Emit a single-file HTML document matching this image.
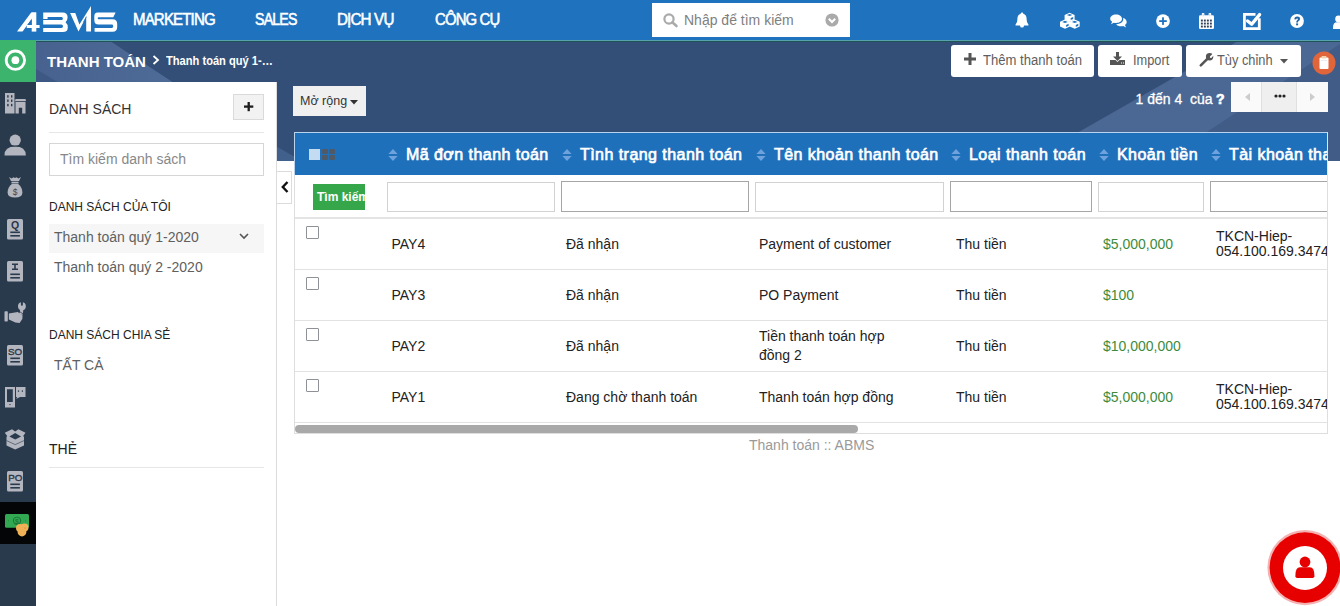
<!DOCTYPE html>
<html><head><meta charset="utf-8">
<style>
*{margin:0;padding:0;box-sizing:border-box}
html,body{width:1340px;height:606px;overflow:hidden;background:#fff;font-family:"Liberation Sans",sans-serif;color:#333}
.a{position:absolute}
.t{position:absolute;white-space:nowrap}
svg{position:absolute;overflow:visible}
#top{left:0;top:0;width:1340px;height:40px;background:#1f72bd}
#tline{left:0;top:40px;width:1340px;height:1px;background:#56a3ab}
.nav{color:#fff;font-weight:normal;-webkit-text-stroke:0.55px #fff;font-size:16px;line-height:16px;top:12px;transform-origin:0 0;letter-spacing:-0.9px}
#hdr{left:36px;top:41px;width:1304px;height:120px;background:#344f77;overflow:hidden}
#side{left:0;top:41px;width:36px;height:565px;background:#2a3a4d}
#green{left:0;top:40px;width:36px;height:42px;background:#3cb46e}
#panel{left:36px;top:82px;width:241px;height:524px;background:#fff;border-right:1px solid #dcdcdc}
.btn{position:absolute;background:#fff;border-radius:3px;top:45px;height:32px}
.btxt{font-size:14px;line-height:14px;color:#5e5e5e;top:53px;transform:scaleX(0.915);transform-origin:0 0}
.ptitle{font-size:14px;line-height:14px;color:#333}
.psub{font-size:12px;line-height:12px;color:#222}
.pitem{font-size:14px;line-height:14px;color:#606060}
.hsep{position:absolute;left:49px;width:215px;height:1px;background:#e6e6e6}
#tbl{left:294px;top:132px;width:1034px;height:302px;border:1px solid #dedede;border-top:none;background:#fff;overflow:hidden}
#thead{left:294px;top:132px;width:1034px;height:43px;background:#1f70bb;border-top:1px solid #b9d3ec;border-left:1px solid #b9d3ec;border-right:1px solid #dfe8f2}
.th{font-size:16px;line-height:16px;font-weight:normal;-webkit-text-stroke:0.65px #fff;letter-spacing:0.45px;color:#fff;top:147px}
.inp{position:absolute;top:182px;height:30px;background:#fff;border:1px solid #d2d2d2}
.inp.d{border-color:#a6a6a6;top:181px;height:31px}
.rowsep{position:absolute;left:295px;width:1033px;height:1px;background:#e2e2e2}
.cb{position:absolute;left:306px;width:13px;height:13px;border:1px solid #8e9196;border-radius:1px;background:#fff}
.td{font-size:14px;line-height:14px;color:#222}
.amt{color:#3d8b40}
</style></head><body>
<div id="top" class="a"></div>
<div id="tline" class="a"></div>
<div id="hdr" class="a">
  <div class="a" style="left:0;top:0;width:1304px;height:1px;background:#20525a;z-index:2"></div>
  <svg width="1304" height="120" style="left:0;top:0">
    <defs><linearGradient id="gl" x1="0" y1="0" x2="1" y2="0"><stop offset="0" stop-color="#47628f"/><stop offset="1" stop-color="#4e6a96"/></linearGradient></defs>
    <polygon points="0,0 74,0 136.5,41 0,41" fill="url(#gl)"/>
    <polygon points="0,28 21.5,41 0,41" fill="#3d5883"/>
    <polygon points="241,105.8 258,115.4 258,120 241,120" fill="#42608c"/>
    <polygon points="992,120 1202,0 1304,0 1304,120" fill="#4b6793"/>
    <polygon points="1127,120 1304,3 1304,120" fill="#425c88"/>
  </svg>
</div>
<div id="side" class="a"></div>
<div id="green" class="a"></div>
<div id="panel" class="a"></div>

<!-- top bar logo -->
<svg width="130" height="40" style="left:0;top:0" viewBox="0 0 130 40">
  <g fill="#fff">
    <polygon points="17,31.6 22.6,31.6 36.3,12.5 31.2,12.5"/>
    <rect x="31.7" y="12.5" width="4.6" height="19.1"/>
    <rect x="26.8" y="25" width="12.8" height="3"/>
    <path d="M43.2,12.4 H62.5 Q67.6,12.4 67.6,17.2 Q67.6,20.4 65.6,22.2 Q67.8,24 67.8,27.6 Q67.8,32.1 62.8,32.1 H43.2 V27.9 H61.4 Q63,27.9 63,26.15 Q63,24.4 61.4,24.4 H43.2 V20 H61.6 Q62.9,20 62.9,18.5 Q62.9,17 61.6,17 H47.6 V19.1 H43.2 Z"/>
    <polygon points="70.1,13 75.3,13 79.4,24.5 91,6 91,31.6 86.2,31.6 86.2,17 78.5,31.6"/>
    <path d="M97.5,12.4 H115.6 L113.3,17.2 H98.6 Q97.7,17.2 97.7,18.2 Q97.7,19.3 98.6,19.3 H112.6 Q117.2,19.3 117.2,24 V27 Q117.2,31.7 112.6,31.7 H94.6 V28 H111.8 Q113.2,28 113.2,26.6 V25.9 Q113.2,24.5 111.8,24.5 H98.4 Q94.3,24.5 94.3,20.3 V16.6 Q94.3,12.4 97.5,12.4 Z"/>
  </g>
  <polygon points="27.3,25 31.6,19.2 31.6,25" fill="#1f72bd"/>
  <line x1="86.4" y1="16.6" x2="83.4" y2="22.4" stroke="#1f72bd" stroke-width="0.9"/>
</svg>
<!-- nav texts -->
<div class="t nav" style="left:133px;transform:scaleX(0.94)">MARKETING</div>
<div class="t nav" style="left:255px;transform:scaleX(0.885)">SALES</div>
<div class="t nav" style="left:337px;transform:scaleX(0.95)">DỊCH VỤ</div>
<div class="t nav" style="left:435px;transform:scaleX(0.93)">CÔNG CỤ</div>

<!-- search box -->
<div class="a" style="left:652px;top:3px;width:198px;height:34px;background:#fff"></div>
<svg width="16" height="14" style="left:663px;top:13px" viewBox="0 0 16 14">
  <circle cx="6" cy="6" r="4.6" fill="none" stroke="#aaa" stroke-width="2.2"/>
  <line x1="9.3" y1="9.3" x2="13.5" y2="13" stroke="#aaa" stroke-width="2.6" stroke-linecap="round"/>
</svg>
<div class="t" style="left:684px;top:13px;font-size:14px;line-height:14px;color:#808080">Nhập để tìm kiếm</div>
<svg width="14" height="14" style="left:825px;top:13px" viewBox="0 0 14 14">
  <circle cx="7" cy="7" r="6.6" fill="#aaa"/>
  <polyline points="3.8,5.8 7,9 10.2,5.8" fill="none" stroke="#fff" stroke-width="2"/>
</svg>

<!-- top right icons -->
<svg width="16" height="16" style="left:1014px;top:12px" viewBox="0 0 16 16">
  <path d="M8,0.5 Q9.3,0.5 9.3,1.8 Q12.6,2.8 12.6,7 Q12.6,11 14.5,12.7 V13.5 H1.5 V12.7 Q3.4,11 3.4,7 Q3.4,2.8 6.7,1.8 Q6.7,0.5 8,0.5 Z M6,13.4 H10 Q10,15.6 8,15.6 Q6,15.6 6,13.4 Z" fill="#fff"/>
</svg>
<svg width="20" height="17" style="left:1060px;top:12px" viewBox="0 0 20 17"><polygon points="4.6,3.0 9.6,0.8 14.6,3.0 14.6,7.8 9.6,10.0 4.6,7.8" fill="#fff"/><polygon points="6.8,3.0999999999999996 9.6,2.0 12.399999999999999,3.0999999999999996 9.6,4.1" fill="#1f72bd"/><polygon points="10.7,6.1 13.2,5.0 13.2,7.0 10.7,8.1" fill="#1f72bd"/><polygon points="0,9.8 5,7.6 10,9.8 10,14.6 5,16.799999999999997 0,14.6" fill="#fff"/><polygon points="2.2,9.899999999999999 5,8.799999999999999 7.8,9.899999999999999 5,10.899999999999999" fill="#1f72bd"/><polygon points="6.1,12.899999999999999 8.6,11.8 8.6,13.8 6.1,14.899999999999999" fill="#1f72bd"/><polygon points="9.7,9.8 14.7,7.6 19.7,9.8 19.7,14.6 14.7,16.799999999999997 9.7,14.6" fill="#fff"/><polygon points="11.899999999999999,9.899999999999999 14.7,8.799999999999999 17.5,9.899999999999999 14.7,10.899999999999999" fill="#1f72bd"/><polygon points="15.799999999999999,12.899999999999999 18.299999999999997,11.8 18.299999999999997,13.8 15.799999999999999,14.899999999999999" fill="#1f72bd"/></svg>
<svg width="17" height="14" style="left:1110px;top:13.8px" viewBox="0 0 17 14">
  <path d="M6,0.5 C9.6,0.5 12,2.4 12,4.8 C12,7.2 9.6,9 6,9 C5.2,9 4.5,8.9 3.8,8.7 L1,10.2 L2.1,7.8 C0.9,7 0.2,6 0.2,4.8 C0.2,2.4 2.6,0.5 6,0.5 Z" fill="#fff"/>
  <path d="M13,3.8 C15.3,4.6 16.7,6.2 16.7,8 C16.7,9.2 16.1,10.2 15,11 L16,13.5 L13.2,12 C12.6,12.2 12,12.3 11.3,12.3 C9,12.3 7.2,11.5 6.2,10.2 C10.3,10.2 13.3,8 13.3,5 C13.3,4.6 13.2,4.2 13,3.8 Z" fill="#fff"/>
</svg>
<svg width="15" height="15" style="left:1156px;top:13.5px" viewBox="0 0 15 15">
  <circle cx="7" cy="7.1" r="6.9" fill="#fff"/>
  <rect x="6.1" y="3.3" width="1.8" height="7.6" fill="#1f72bd"/>
  <rect x="3.2" y="6.2" width="7.6" height="1.8" fill="#1f72bd"/>
</svg>
<svg width="15" height="16" style="left:1199px;top:12.6px" viewBox="0 0 15 16">
  <rect x="0" y="2.2" width="15" height="13.8" rx="1.3" fill="#fff"/>
  <rect x="2.8" y="0" width="2.6" height="4" rx="0.8" fill="#fff"/>
  <rect x="9.6" y="0" width="2.6" height="4" rx="0.8" fill="#fff"/>
  <rect x="3.8" y="0.7" width="0.6" height="2.6" fill="#9fb4cc"/>
  <rect x="10.6" y="0.7" width="0.6" height="2.6" fill="#9fb4cc"/>
  <g fill="#2d3e56"><rect x="1.9" y="6.6" width="1.9" height="1.9"/><rect x="4.9" y="6.6" width="1.9" height="1.9"/><rect x="7.9" y="6.6" width="1.9" height="1.9"/><rect x="10.9" y="6.6" width="1.9" height="1.9"/><rect x="1.9" y="9.6" width="1.9" height="1.9"/><rect x="4.9" y="9.6" width="1.9" height="1.9"/><rect x="7.9" y="9.6" width="1.9" height="1.9"/><rect x="10.9" y="9.6" width="1.9" height="1.9"/><rect x="1.9" y="12.6" width="1.9" height="1.9"/><rect x="4.9" y="12.6" width="1.9" height="1.9"/><rect x="7.9" y="12.6" width="1.9" height="1.9"/><rect x="10.9" y="12.6" width="1.9" height="1.9"/></g>
</svg>
<svg width="19" height="19" style="left:1243px;top:12px" viewBox="0 0 19 19">
  <path d="M0,0.9 H12.5 V3.7 H2.8 V15.2 H14.9 V6.2 H17.7 V18 H0 Z" fill="#fff"/>
  <polyline points="4.6,8.9 8.7,12.3 16.6,2.6" fill="none" stroke="#fff" stroke-width="3.3" stroke-linecap="round" stroke-linejoin="round"/>
</svg>
<svg width="15" height="15" style="left:1290px;top:13.6px" viewBox="0 0 15 15">
  <circle cx="7" cy="7" r="6.9" fill="#fff"/>
  <path d="M4.3,5.2 Q4.5,2.6 7.2,2.6 Q10,2.6 10,5 Q10,6.3 8.6,7.1 Q8,7.5 8,8.5 H6.2 Q6.1,6.9 7.2,6.2 Q8,5.7 8,5.1 Q8,4.4 7.1,4.4 Q6.3,4.4 6.1,5.5 Z" fill="#1f64a6"/>
  <rect x="6.1" y="9.4" width="2" height="1.9" fill="#1f64a6"/>
</svg>
<svg width="10" height="14" style="left:1333px;top:15px" viewBox="0 0 10 14">
  <circle cx="5.6" cy="4" r="3.4" fill="#fff"/>
  <path d="M0,12.5 Q0,7.2 4,7.2 H9 Q12,7.2 12,12.5 V14 H0 Z" fill="#fff"/>
</svg>

<!-- green target icon -->
<svg width="22" height="22" style="left:4px;top:50px" viewBox="0 0 22 22">
  <circle cx="11.4" cy="10.2" r="9.2" fill="none" stroke="#fff" stroke-width="2.8"/>
  <circle cx="11.4" cy="10.2" r="3.9" fill="#fff"/>
</svg>

<!-- breadcrumb -->
<div class="t" style="left:47px;top:54px;font-size:15px;line-height:15px;font-weight:bold;color:#fff">THANH TOÁN</div>
<svg width="8" height="10" style="left:152px;top:55px" viewBox="0 0 8 10">
  <polyline points="1.5,1 6,5 1.5,9" fill="none" stroke="#fff" stroke-width="1.8"/>
</svg>
<div class="t" style="left:166px;top:54px;font-size:13px;line-height:13px;font-weight:bold;color:#fff;transform:scaleX(0.855);transform-origin:0 0">Thanh toán quý 1-…</div>

<!-- toolbar buttons -->
<div class="btn" style="left:951px;width:143px"></div>
<svg width="12" height="12" style="left:964px;top:53px" viewBox="0 0 12 12">
  <rect x="4.5" y="0" width="3" height="12" fill="#555"/><rect x="0" y="4.5" width="12" height="3" fill="#555"/>
</svg>
<div class="t btxt" style="left:983px;transform:scaleX(0.935)">Thêm thanh toán</div>
<div class="btn" style="left:1098px;width:84px"></div>
<svg width="15" height="13" style="left:1110px;top:52px" viewBox="0 0 15 13">
  <rect x="6" y="0" width="3" height="5" fill="#555"/>
  <polygon points="3,4.5 12,4.5 7.5,9" fill="#555"/>
  <path d="M0,8 H5.5 L7.5,10 L9.5,8 H15 V13 H0 Z" fill="#555"/>
  <rect x="11" y="10.5" width="1" height="1" fill="#fff"/><rect x="13" y="10.5" width="1" height="1" fill="#fff"/>
</svg>
<div class="t btxt" style="left:1133px">Import</div>
<div class="btn" style="left:1186px;width:115px"></div>
<svg width="15" height="14" style="left:1199px;top:53px" viewBox="0 0 15 14">
  <line x1="1.8" y1="12.4" x2="8.6" y2="5.6" stroke="#555" stroke-width="2.6" stroke-linecap="round"/>
  <circle cx="10.6" cy="3.8" r="3.7" fill="#555"/>
  <polygon points="11.2,3.2 14.6,-0.2 16,1.2 12.6,4.6" fill="#fff"/>
  <circle cx="11.9" cy="3.9" r="1" fill="#fff"/>
</svg>
<div class="t btxt" style="left:1217px">Tùy chỉnh</div>
<svg width="8" height="5" style="left:1280px;top:59px" viewBox="0 0 8 5"><polygon points="0,0 8,0 4,4.5" fill="#555"/></svg>
<svg width="24" height="24" style="left:1312px;top:51px" viewBox="0 0 24 24">
  <circle cx="12" cy="12" r="11.5" fill="#e0653b"/>
  <rect x="7.5" y="6.5" width="9" height="11.5" rx="1" fill="#fff"/>
  <rect x="9.5" y="5" width="5" height="2.5" rx="0.8" fill="#f2d1b0"/>
  <rect x="9" y="9" width="6" height="0.8" fill="#e8e8e8"/>
</svg>

<!-- Mở rộng -->
<div class="a" style="left:293px;top:86px;width:73px;height:30px;background:#f0f0f0"></div>
<div class="t" style="left:300px;top:95px;font-size:12.5px;line-height:12px;color:#333">Mở rộng</div>
<svg width="8" height="5" style="left:350px;top:100px" viewBox="0 0 8 5"><polygon points="0,0 8,0 4,4.5" fill="#333"/></svg>

<!-- pager -->
<div class="t" style="left:1135.5px;top:92px;font-size:14px;line-height:14px;color:#fff;-webkit-text-stroke:0.3px #fff">1 đến 4 &nbsp;của</div>
<div class="t" style="left:1216px;top:92px;font-size:14px;line-height:14px;color:#fff;font-weight:bold;-webkit-text-stroke:0.7px #fff">?</div>
<div class="a" style="left:1231px;top:82px;width:97px;height:30px;background:#fafafa"></div>
<div class="a" style="left:1261px;top:82px;width:36px;height:30px;background:#efefef;border-left:1px solid #e0e0e0;border-right:1px solid #e0e0e0"></div>
<svg width="5" height="8" style="left:1245px;top:93px" viewBox="0 0 5 8"><polygon points="5,0 5,8 0,4" fill="#ccc"/></svg>
<svg width="5" height="8" style="left:1310px;top:93px" viewBox="0 0 5 8"><polygon points="0,0 0,8 5,4" fill="#ccc"/></svg>
<svg width="12" height="4" style="left:1274px;top:94px" viewBox="0 0 12 4"><circle cx="2" cy="2" r="1.6" fill="#222"/><circle cx="6" cy="2" r="1.6" fill="#222"/><circle cx="10" cy="2" r="1.6" fill="#222"/></svg>

<!-- side icons -->
<div id="sideicons"><svg width="36" height="470" style="left:0;top:84px" viewBox="0 84 36 470">
 <g fill="#b3b6bf">
  <!-- building -->
  <path d="M5,93 H14.5 V113.5 H5 Z"/>
  <path d="M15.5,99 H25.5 L26,101 H25.5 V113.5 H22.2 V107.8 H18.8 V113.5 H15.5 V101 H15 Z"/>
  <!-- user -->
  <circle cx="15.2" cy="140.2" r="5.6"/>
  <path d="M4.5,155.4 Q4.5,146.5 15.2,146.5 Q25.8,146.5 25.8,155.4 Z"/>
  <!-- money bag -->
  <path d="M9,177 L11.5,178.5 L13.5,177.3 L15,178 L16.5,177.3 L18.5,178.5 L21,177 L19,181 H11 Z"/>
  <rect x="11.5" y="181.7" width="7" height="1.8"/>
  <path d="M11.8,184 H18.2 Q22.4,187.5 22.4,192.5 Q22.4,197.5 15,197.5 Q7.6,197.5 7.6,192.5 Q7.6,187.5 11.8,184 Z"/>
  <!-- docs -->
  <rect x="7" y="219" width="16" height="20.5" rx="1.5"/>
  <rect x="7" y="261" width="16" height="20.5" rx="1.5"/>
  <rect x="7" y="345" width="16" height="20.5" rx="1.5"/>
  <rect x="7" y="471" width="16" height="20.5" rx="1.5"/>
  <!-- hand + wrench -->
  <rect x="4.5" y="311.2" width="3.3" height="10.4" rx="0.8"/>
  <path d="M8.9,313.4 L17.7,312 L22.6,315.5 L22.3,319 L19.6,323.1 L15.4,322.6 L8.9,319.4 Z"/>
  <circle cx="21.9" cy="306.2" r="3.9"/>
  <polygon points="20.2,308.5 23.5,308.5 22.7,314.8 19.4,314.8"/>
  <!-- phone + chat -->
  <path d="M5,387 H15 V407.5 H5 Z M7,389.2 V402 H12.8 V389.2 Z"/>
  <path d="M16,387 H25.5 V397 H20 L16.2,399 L17.2,397 H16 Z"/>
  <!-- box -->
  <path d="M4.8,432.8 L12,429.2 L15.2,431.4 L18.4,429.2 L25.5,432.8 L23.2,436 L24,437 V445.6 L15.2,449.6 L6.5,445.6 V437 L7.2,436 Z"/>
 </g>
 <g fill="#2a3a4d">
  <!-- building windows -->
  <rect x="7.2" y="95.2" width="1.4" height="2.4"/><rect x="11" y="95.2" width="1.4" height="2.4"/>
  <rect x="7.2" y="99.5" width="1.4" height="2.4"/><rect x="11" y="99.5" width="1.4" height="2.4"/>
  <rect x="7.2" y="103.9" width="1.4" height="2.4"/><rect x="11" y="103.9" width="1.4" height="2.4"/>
  <rect x="15.3" y="101" width="11" height="0.8"/>
  <rect x="20.9" y="301.5" width="2" height="4.2" rx="1"/>
  <rect x="18" y="312.2" width="6" height="0.7" transform="rotate(35 21 312.5)"/>
  <!-- user gap -->
  <rect x="10" y="145.6" width="10.4" height="0.9"/>
  <!-- bag $ -->
  <text x="15" y="195" style="font-family:'Liberation Sans'" font-size="8.5" text-anchor="middle" fill="#3a4656">$</text>
  <!-- doc letters -->
  <text x="15" y="229" style="font-family:'Liberation Sans'" font-size="10.5" font-weight="bold" text-anchor="middle" fill="#2a3446">Q</text>
  <path d="M12,263.5 H18 V265 H15.8 V268.6 H18 V270.1 H12 V268.6 H14.2 V265 H12 Z"/>
  <text x="15" y="355" style="font-family:'Liberation Sans'" font-size="9.8" text-anchor="middle" fill="#2a3446" stroke="#2a3446" stroke-width="0.35">SO</text>
  <text x="15.3" y="481" style="font-family:'Liberation Sans'" font-size="9.8" text-anchor="middle" fill="#2a3446" stroke="#2a3446" stroke-width="0.35">PO</text>
  <rect x="10.3" y="231.5" width="9.6" height="1.6"/><rect x="10.3" y="235" width="9.6" height="1.6"/>
  <rect x="10.3" y="273.5" width="9.6" height="1.6"/><rect x="10.3" y="277" width="9.6" height="1.6"/>
  <rect x="10.3" y="357.5" width="9.6" height="1.6"/><rect x="10.3" y="361" width="9.6" height="1.6"/>
  <rect x="10.3" y="483.5" width="9.6" height="1.6"/><rect x="10.3" y="487" width="9.6" height="1.6"/>
  <!-- phone home btn, chat dots -->
  <rect x="9.4" y="404" width="1.1" height="1.1"/>
  <rect x="17.9" y="390.4" width="1.2" height="1.4"/><rect x="21.8" y="390.4" width="1.2" height="1.4"/>
  <!-- box inner -->
  <path d="M9.4,436.4 L15.2,433 L21,436.4 L15.2,439.6 Z"/>
  <path d="M6.5,440.6 L15.2,444.6 L24,440.6" fill="none" stroke="#2a3a4d" stroke-width="0.6"/>
 </g>
</svg>
<div class="a" style="left:0;top:502px;width:36px;height:42px;background:#030507"></div>
<svg width="26" height="24" style="left:4px;top:513px" viewBox="0 0 26 24">
  <rect x="1" y="1" width="24" height="13.7" rx="1.5" fill="#33a852"/>
  <circle cx="13" cy="7.8" r="3.6" fill="none" stroke="#1c7a36" stroke-width="1.1"/>
  <text x="13" y="10.6" style="font-family:'Liberation Sans'" font-size="7" font-weight="bold" text-anchor="middle" fill="#1c7a36">$</text>
  <circle cx="4.5" cy="7.8" r="0.6" fill="#22883c"/><circle cx="21.5" cy="7.8" r="0.6" fill="#22883c"/>
  <circle cx="16" cy="15" r="4" fill="#f0b055"/>
  <circle cx="20.5" cy="14.5" r="4" fill="#f0b055"/>
  <circle cx="18" cy="19" r="4.4" fill="#f0b055"/>
  <circle cx="21" cy="15" r="0.5" fill="#c07020"/>
</svg>
</div><!--/side-->

<!-- left panel -->
<div class="t ptitle" style="left:49px;top:102px">DANH SÁCH</div>
<div class="a" style="left:233px;top:94px;width:31px;height:26px;background:#f2f2f2;border:1px solid #dadada"></div>
<svg width="10" height="10" style="left:243.7px;top:101.8px" viewBox="0 0 10 10"><rect x="3.55" y="0" width="2.3" height="9.2" fill="#1e1e1e"/><rect x="0" y="3.45" width="9.3" height="2.3" fill="#1e1e1e"/></svg>
<div class="hsep" style="top:132px"></div>
<div class="a" style="left:49px;top:143px;width:215px;height:33px;border:1px solid #d6d6d6"></div>
<div class="t pitem" style="left:60px;top:152px;color:#888">Tìm kiếm danh sách</div>
<div class="t psub" style="left:49px;top:201px">DANH SÁCH CỦA TÔI</div>
<div class="a" style="left:49px;top:224px;width:215px;height:29px;background:#f6f6f6"></div>
<div class="t pitem" style="left:54px;top:230px">Thanh toán quý 1-2020</div>
<svg width="10" height="7" style="left:239px;top:233px" viewBox="0 0 10 7"><polyline points="1,1 5,5 9,1" fill="none" stroke="#555" stroke-width="1.6"/></svg>
<div class="t pitem" style="left:54px;top:260px">Thanh toán quý 2 -2020</div>
<div class="t psub" style="left:49px;top:329px">DANH SÁCH CHIA SẺ</div>
<div class="t pitem" style="left:54px;top:358px">TẤT CẢ</div>
<div class="t ptitle" style="left:49px;top:442px;color:#222">THẺ</div>
<div class="hsep" style="top:467px"></div>

<!-- collapse btn -->
<div class="a" style="left:277px;top:171px;width:15px;height:33px;background:#fff;border:1px solid #dcdcdc;border-left:none"></div>
<svg width="8" height="12" style="left:281px;top:181px" viewBox="0 0 8 12"><polyline points="6.5,1 1.8,6 6.5,11" fill="none" stroke="#111" stroke-width="2.4"/></svg>

<!-- table -->
<div id="tbl" class="a"></div>
<div id="thead" class="a"></div>
<div id="tablecontent" class="a" style="left:0;top:0;width:1327px;height:606px;overflow:hidden"><div class="a" style="left:309px;top:149px;width:11px;height:11px;background:#c4dcf2"></div>
<div class="a" style="left:322px;top:149px;width:6px;height:5px;background:#4f5a66;border-radius:1px"></div>
<div class="a" style="left:329px;top:149px;width:6px;height:5px;background:#4f5a66;border-radius:1px"></div>
<div class="a" style="left:322px;top:155px;width:6px;height:5px;background:#4f5a66;border-radius:1px"></div>
<div class="a" style="left:329px;top:155px;width:6px;height:5px;background:#4f5a66;border-radius:1px"></div>
<svg width="10" height="13" style="left:388px;top:148.6px" viewBox="0 0 10 13"><polygon points="5,0 9.6,5 0.4,5" fill="#6ea2dc"/><polygon points="0.4,7 9.6,7 5,12" fill="#6ea2dc"/></svg>
<div class="t th" style="left:406px">Mã đơn thanh toán</div>
<div class="inp" style="left:387px;width:168px"></div>
<svg width="10" height="13" style="left:562px;top:148.6px" viewBox="0 0 10 13"><polygon points="5,0 9.6,5 0.4,5" fill="#6ea2dc"/><polygon points="0.4,7 9.6,7 5,12" fill="#6ea2dc"/></svg>
<div class="t th" style="left:580px">Tình trạng thanh toán</div>
<div class="inp d" style="left:561px;width:188px"></div>
<svg width="10" height="13" style="left:756px;top:148.6px" viewBox="0 0 10 13"><polygon points="5,0 9.6,5 0.4,5" fill="#6ea2dc"/><polygon points="0.4,7 9.6,7 5,12" fill="#6ea2dc"/></svg>
<div class="t th" style="left:774px">Tên khoản thanh toán</div>
<div class="inp" style="left:755px;width:189px"></div>
<svg width="10" height="13" style="left:951px;top:148.6px" viewBox="0 0 10 13"><polygon points="5,0 9.6,5 0.4,5" fill="#6ea2dc"/><polygon points="0.4,7 9.6,7 5,12" fill="#6ea2dc"/></svg>
<div class="t th" style="left:969px">Loại thanh toán</div>
<div class="inp d" style="left:950px;width:142px"></div>
<svg width="10" height="13" style="left:1099px;top:148.6px" viewBox="0 0 10 13"><polygon points="5,0 9.6,5 0.4,5" fill="#6ea2dc"/><polygon points="0.4,7 9.6,7 5,12" fill="#6ea2dc"/></svg>
<div class="t th" style="left:1117px">Khoản tiền</div>
<div class="inp" style="left:1098px;width:106px"></div>
<svg width="10" height="13" style="left:1211px;top:148.6px" viewBox="0 0 10 13"><polygon points="5,0 9.6,5 0.4,5" fill="#6ea2dc"/><polygon points="0.4,7 9.6,7 5,12" fill="#6ea2dc"/></svg>
<div class="t th" style="left:1229px">Tài khoản thanh toán</div>
<div class="inp d" style="left:1210px;width:140px"></div>
<div class="a" style="left:313px;top:184px;width:52px;height:26px;background:#35a74a;overflow:hidden"><div class="t" style="left:4px;top:7px;font-size:12px;line-height:12px;font-weight:bold;color:#fff">Tìm kiếm</div></div>
<div class="a" style="left:295px;top:217px;width:1033px;height:2px;background:#e4e4e4"></div>
<div class="cb" style="top:226px"></div>
<div class="t td" style="left:391.5px;top:237px">PAY4</div>
<div class="t td" style="left:566px;top:237px">Đã nhận</div>
<div class="t td" style="left:759px;top:237px">Payment of customer</div>
<div class="t td" style="left:956px;top:237px">Thu tiền</div>
<div class="t td amt" style="left:1103px;top:237px">$5,000,000</div>
<div class="a" style="left:1216px;top:229px;width:112px;height:32px;overflow:hidden"><div class="t td" style="left:0;top:0;line-height:15px">TKCN-Hiep-<br>054.100.169.3474</div></div>
<div class="rowsep" style="top:269px"></div>
<div class="cb" style="top:277px"></div>
<div class="t td" style="left:391.5px;top:288px">PAY3</div>
<div class="t td" style="left:566px;top:288px">Đã nhận</div>
<div class="t td" style="left:759px;top:288px">PO Payment</div>
<div class="t td" style="left:956px;top:288px">Thu tiền</div>
<div class="t td amt" style="left:1103px;top:288px">$100</div>
<div class="rowsep" style="top:320px"></div>
<div class="cb" style="top:328px"></div>
<div class="t td" style="left:391.5px;top:339px">PAY2</div>
<div class="t td" style="left:566px;top:339px">Đã nhận</div>
<div class="t td" style="left:759px;top:327px;line-height:19px">Tiền thanh toán hợp<br>đồng 2</div>
<div class="t td" style="left:956px;top:339px">Thu tiền</div>
<div class="t td amt" style="left:1103px;top:339px">$10,000,000</div>
<div class="rowsep" style="top:371px"></div>
<div class="cb" style="top:379px"></div>
<div class="t td" style="left:391.5px;top:390px">PAY1</div>
<div class="t td" style="left:566px;top:390px">Đang chờ thanh toán</div>
<div class="t td" style="left:759px;top:390px">Thanh toán hợp đồng</div>
<div class="t td" style="left:956px;top:390px">Thu tiền</div>
<div class="t td amt" style="left:1103px;top:390px">$5,000,000</div>
<div class="a" style="left:1216px;top:382px;width:112px;height:32px;overflow:hidden"><div class="t td" style="left:0;top:0;line-height:15px">TKCN-Hiep-<br>054.100.169.3474</div></div>
<div class="rowsep" style="top:422px"></div>
<div class="a" style="left:295px;top:425px;width:563px;height:8px;background:#a9a9a9;border-radius:4px"></div>
</div><!--/tc-->

<!-- footer -->
<div class="t" style="left:749px;top:438px;font-size:14px;line-height:14px;color:#9a9a9a">Thanh toán :: ABMS</div>

<!-- chat button -->
<svg width="76" height="76" style="left:1267px;top:530px" viewBox="0 0 76 76">
  <circle cx="38" cy="37.6" r="37.6" fill="#f4b2b2"/>
  <circle cx="38" cy="37.6" r="35.4" fill="#e60000"/>
  <circle cx="38" cy="38" r="22" fill="#fff"/>
  <circle cx="38" cy="32" r="5.4" fill="#e60000"/>
  <path d="M28.4,45.5 Q28.4,37.2 33,37.2 H42.8 Q47.4,37.2 47.4,45.5 V46.3 Q47.4,48.1 45.6,48.1 H30.2 Q28.4,48.1 28.4,46.3 Z" fill="#e60000"/>
</svg>
</body></html>
